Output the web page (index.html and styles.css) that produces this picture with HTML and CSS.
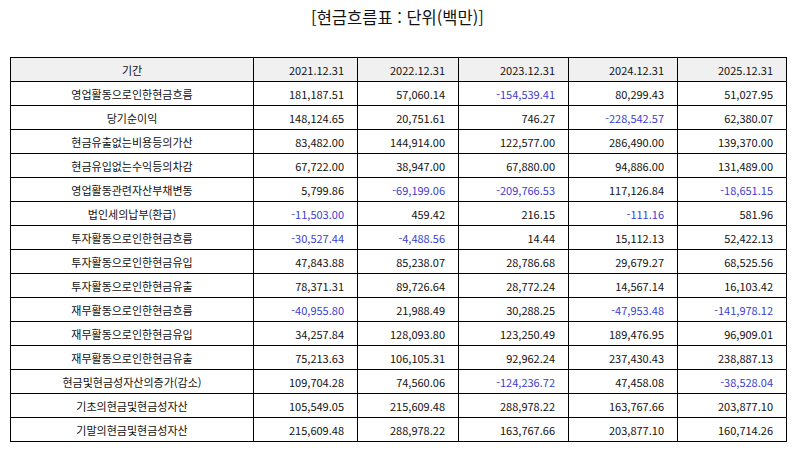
FILE: index.html
```html
<!DOCTYPE html>
<html lang="ko">
<head>
<meta charset="utf-8">
<link rel="stylesheet" href="styles.css">
</head>
<body>
<div class="page">
  <h1 class="title">[현금흐름표 : 단위(백만)]</h1>
  <table class="cf">
    <colgroup>
      <col class="c0"><col class="c1"><col class="c2"><col class="c3"><col class="c4"><col class="c5">
    </colgroup>
    <thead>
      <tr><th>기간</th><th>2021.12.31</th><th>2022.12.31</th><th>2023.12.31</th><th>2024.12.31</th><th>2025.12.31</th></tr>
    </thead>
    <tbody>
      <tr><td>영업활동으로인한현금흐름</td><td>181,187.51</td><td>57,060.14</td><td class="neg">-154,539.41</td><td>80,299.43</td><td>51,027.95</td></tr>
      <tr><td>당기순이익</td><td>148,124.65</td><td>20,751.61</td><td>746.27</td><td class="neg">-228,542.57</td><td>62,380.07</td></tr>
      <tr><td>현금유출없는비용등의가산</td><td>83,482.00</td><td>144,914.00</td><td>122,577.00</td><td>286,490.00</td><td>139,370.00</td></tr>
      <tr><td>현금유입없는수익등의차감</td><td>67,722.00</td><td>38,947.00</td><td>67,880.00</td><td>94,886.00</td><td>131,489.00</td></tr>
      <tr><td>영업활동관련자산부채변동</td><td>5,799.86</td><td class="neg">-69,199.06</td><td class="neg">-209,766.53</td><td>117,126.84</td><td class="neg">-18,651.15</td></tr>
      <tr><td>법인세의납부(환급)</td><td class="neg">-11,503.00</td><td>459.42</td><td>216.15</td><td class="neg">-111.16</td><td>581.96</td></tr>
      <tr><td>투자활동으로인한현금흐름</td><td class="neg">-30,527.44</td><td class="neg">-4,488.56</td><td>14.44</td><td>15,112.13</td><td>52,422.13</td></tr>
      <tr><td>투자활동으로인한현금유입</td><td>47,843.88</td><td>85,238.07</td><td>28,786.68</td><td>29,679.27</td><td>68,525.56</td></tr>
      <tr><td>투자활동으로인한현금유출</td><td>78,371.31</td><td>89,726.64</td><td>28,772.24</td><td>14,567.14</td><td>16,103.42</td></tr>
      <tr><td>재무활동으로인한현금흐름</td><td class="neg">-40,955.80</td><td>21,988.49</td><td>30,288.25</td><td class="neg">-47,953.48</td><td class="neg">-141,978.12</td></tr>
      <tr><td>재무활동으로인한현금유입</td><td>34,257.84</td><td>128,093.80</td><td>123,250.49</td><td>189,476.95</td><td>96,909.01</td></tr>
      <tr><td>재무활동으로인한현금유출</td><td>75,213.63</td><td>106,105.31</td><td>92,962.24</td><td>237,430.43</td><td>238,887.13</td></tr>
      <tr><td>현금및현금성자산의증가(감소)</td><td>109,704.28</td><td>74,560.06</td><td class="neg">-124,236.72</td><td>47,458.08</td><td class="neg">-38,528.04</td></tr>
      <tr><td>기초의현금및현금성자산</td><td>105,549.05</td><td>215,609.48</td><td>288,978.22</td><td>163,767.66</td><td>203,877.10</td></tr>
      <tr><td>기말의현금및현금성자산</td><td>215,609.48</td><td>288,978.22</td><td>163,767.66</td><td>203,877.10</td><td>160,714.26</td></tr>
    </tbody>
  </table>
</div>
</body>
</html>
```

FILE: styles.css
```css
html, body {
  margin: 0;
  padding: 0;
  background: #ffffff;
}
body {
  font-family: "Noto Sans CJK KR", "Noto Sans", sans-serif;
  color: #111111;
}
.page {
  width: 794px;
  padding: 0 0 0 10px;
  box-sizing: border-box;
}
.title {
  margin: 0;
  height: 57px;
  padding-top: 5px;
  box-sizing: border-box;
  width: 775px;
  text-align: center;
  font-size: 16.5px;
  font-weight: normal;
  line-height: 24px;
  color: #111111;
}
.cf {
  border-collapse: collapse;
  table-layout: fixed;
  width: 776px;
  font-size: 11px;
}
.c0 { width: 243px; }
.c1 { width: 104px; }
.c2 { width: 101px; }
.c3 { width: 110px; }
.c4 { width: 109px; }
.c5 { width: 109px; }
.cf th, .cf td {
  border: 1px solid #000000;
  height: 24px;
  box-sizing: border-box;
  padding: 0 13px 0 4px;
  line-height: 20px;
  text-align: right;
  font-weight: normal;
  white-space: nowrap;
}
.cf th {
  background: #f0f0f0;
}
.cf th:first-child, .cf td:first-child {
  text-align: center;
  padding: 0 4px;
}
.cf td.neg {
  color: #3c3cd2;
}
```
